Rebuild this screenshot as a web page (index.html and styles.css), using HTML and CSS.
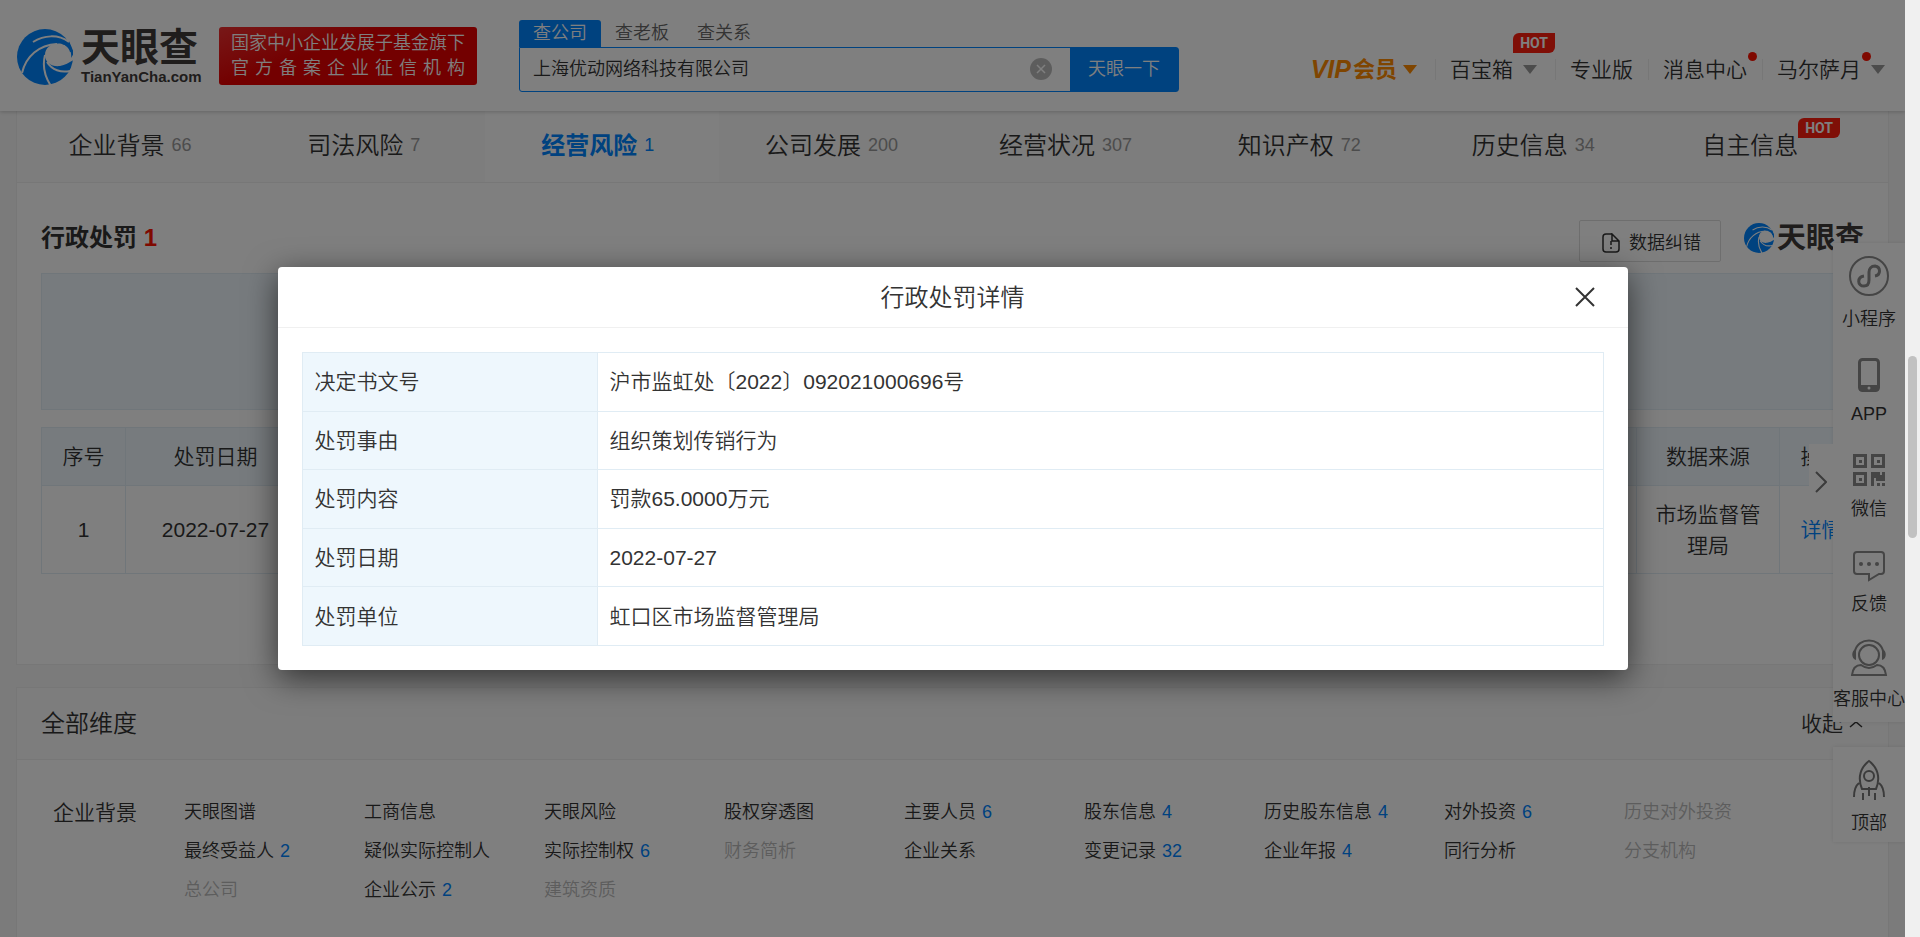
FILE: index.html
```html
<!DOCTYPE html>
<html lang="zh-CN">
<head>
    <meta charset="UTF-8">
    <meta name="viewport" content="width=device-width, initial-scale=1.0">
    <title>天眼查</title>
    <link rel="stylesheet" href="styles.css">
</head>
<body>
    <!-- shared icon shapes -->
    <svg class="defs" aria-hidden="true">
        <symbol id="swirl" viewBox="0 0 56 56">
            <circle cx="28" cy="28" r="28" fill="#0084ff"/>
            <path d="M45 15C36 13 28 18 28 26C28 34 35 38 43 37C49 36 53 33 58 30V22L53 23C52 19 49 16 45 15Z" fill="#fff"/>
            <path d="M45 15C52 17 55 22 54 29L57 24L52 12Z" fill="#0084ff"/>
            <path d="M16 13C27 6 41 5 52 13" fill="none" stroke="#fff" stroke-width="2"/>
            <path d="M40 15C22 16 9 27 5 44" fill="none" stroke="#fff" stroke-width="2"/>
            <path d="M28 26C25 38 28 48 34 57" fill="none" stroke="#fff" stroke-width="2"/>
            <path d="M30 33C35 41 44 44 53 42" fill="none" stroke="#fff" stroke-width="2"/>
        </symbol>
    </svg>

    <div class="page">
        <header class="header">
            <a class="logo" href="#">
                <svg class="logo-mark"><use href="#swirl"/></svg>
                <span class="logo-words">
                    <span class="logo-cn">天眼查</span>
                    <span class="logo-en">TianYanCha.com</span>
                </span>
            </a>
            <div class="slogan">
                <div>国家中小企业发展子基金旗下</div>
                <div>官 方 备 案 企 业 征 信 机 构</div>
            </div>
            <form class="search">
                <div class="search-tabs">
                    <a class="search-tab on" href="#">查公司</a>
                    <a class="search-tab" href="#">查老板</a>
                    <a class="search-tab" href="#">查关系</a>
                </div>
                <div class="search-row">
                    <input class="search-input" type="text" value="上海优动网络科技有限公司" aria-label="公司名称">
                    <button class="search-clear" type="button" aria-label="清除">
                        <svg width="22" height="22" viewBox="0 0 22 22"><circle cx="11" cy="11" r="11" fill="#bbb"/><path d="M7 7L15 15M15 7L7 15" stroke="#fff" stroke-width="1.5"/></svg>
                    </button>
                    <button class="search-btn" type="submit">天眼一下</button>
                </div>
            </form>
            <nav class="user-nav">
                <a class="vip" href="#"><i>VIP</i>会员<span class="caret"></span></a>
                <a class="box" href="#">百宝箱<span class="caret"></span><span class="hot hot-nav">HOT</span></a>
                <a href="#">专业版</a>
                <a class="dotted" href="#">消息中心</a>
                <a href="#"><span class="dotted">马尔萨月</span><span class="caret"></span></a>
            </nav>
        </header>

        <main class="main">
            <section class="card first">
                <nav class="tabs">
                    <a class="tab" href="#">企业背景<span class="num">66</span></a>
                    <a class="tab" href="#">司法风险<span class="num">7</span></a>
                    <a class="tab active" href="#">经营风险<span class="num">1</span></a>
                    <a class="tab" href="#">公司发展<span class="num">200</span></a>
                    <a class="tab" href="#">经营状况<span class="num">307</span></a>
                    <a class="tab" href="#">知识产权<span class="num">72</span></a>
                    <a class="tab" href="#">历史信息<span class="num">34</span></a>
                    <a class="tab tab-hot" href="#">自主信息<span class="hot">HOT</span></a>
                </nav>
                <div class="block">
                    <div class="block-head">
                        <h2>行政处罚 <span class="red">1</span></h2>
                        <button class="fix-btn" type="button">
                            <svg width="18" height="20" viewBox="0 0 18 20" fill="none" stroke="#333" stroke-width="1.5"><path d="M10 1H4Q1 1 1 4V16Q1 19 4 19H14Q17 19 17 16V8L10 1V8H17"/><path d="M9 8V12M9 14V16"/></svg>
                            数据纠错
                        </button>
                        <div class="watermark">
                            <svg class="watermark-mark"><use href="#swirl"/></svg>
                            <span>天眼查</span>
                        </div>
                    </div>
                    <div class="banner"></div>
                    <table class="list">
                        <colgroup>
                            <col class="c-no"><col class="c-date"><col><col class="c-src"><col class="c-op">
                        </colgroup>
                        <thead>
                            <tr><th>序号</th><th>处罚日期</th><th></th><th>数据来源</th><th>操作</th></tr>
                        </thead>
                        <tbody>
                            <tr><td>1</td><td>2022-07-27</td><td></td><td>市场监督管理局</td><td><a href="#">详情</a></td></tr>
                        </tbody>
                    </table>
                </div>
            </section>

            <section class="card">
                <div class="dim-head">
                    <h3>全部维度</h3>
                    <button class="fold" type="button">收起 <svg width="16" height="8" viewBox="0 0 16 8" fill="none" stroke="#333" stroke-width="1.5"><path d="M2 7L8 2L14 7"/></svg></button>
                </div>
                <div class="dim-body">
                    <h4>企业背景</h4>
                    <div class="dims">
                        <a href="#">天眼图谱</a>
                        <a href="#">工商信息</a>
                        <a href="#">天眼风险</a>
                        <a href="#">股权穿透图</a>
                        <a href="#">主要人员 <b>6</b></a>
                        <a href="#">股东信息 <b>4</b></a>
                        <a href="#">历史股东信息 <b>4</b></a>
                        <a href="#">对外投资 <b>6</b></a>
                        <a class="off" href="#">历史对外投资</a>
                        <a href="#">最终受益人 <b>2</b></a>
                        <a href="#">疑似实际控制人</a>
                        <a href="#">实际控制权 <b>6</b></a>
                        <a class="off" href="#">财务简析</a>
                        <a href="#">企业关系</a>
                        <a href="#">变更记录 <b>32</b></a>
                        <a href="#">企业年报 <b>4</b></a>
                        <a href="#">同行分析</a>
                        <a class="off" href="#">分支机构</a>
                        <a class="off" href="#">总公司</a>
                        <a href="#">企业公示 <b>2</b></a>
                        <a class="off" href="#">建筑资质</a>
                    </div>
                </div>
            </section>
        </main>

        <!-- floating tools on the right edge -->
        <aside class="side">
            <button class="side-toggle" type="button" aria-label="收起工具栏">
                <svg width="12" height="22" viewBox="0 0 12 22" fill="none" stroke="#777" stroke-width="2"><path d="M1 1L11 11L1 21"/></svg>
            </button>
            <div class="side-group">
                <a class="side-item" href="#">
                    <svg width="42" height="42" viewBox="0 0 42 42" fill="none" stroke="#8a8a8a" stroke-width="2"><circle cx="21" cy="21" r="19"/><path stroke-width="3" d="M16 21C9 22 9 31 16 31C20 31 21 28 21 25V17C21 14 23 11 27 11C33 12 33 20 27 21"/></svg>
                    小程序
                </a>
                <a class="side-item" href="#">
                    <svg width="22" height="34" viewBox="0 0 22 34"><rect x="1.500" y="1.500" width="19" height="31" rx="3" fill="none" stroke="#8a8a8a" stroke-width="3"/><path d="M1 27H21V31Q21 33 18 33H4Q1 33 1 31Z" fill="#8a8a8a"/><circle cx="11" cy="30" r="1.500" fill="#fff"/></svg>
                    APP
                </a>
                <a class="side-item" href="#">
                    <svg width="34" height="34" viewBox="0 0 34 34"><g fill="none" stroke="#8a8a8a" stroke-width="3"><rect x="2.500" y="2.500" width="11" height="11"/><rect x="20.500" y="2.500" width="11" height="11"/><rect x="2.500" y="20.500" width="11" height="11"/></g><path fill="#8a8a8a" d="M7 7h3v3h-3zM25 7h3v3h-3zM7 25h3v3h-3zM19 19h9v3h2v-3h3v9h-9v-3h-2v8h-3zM25 30h3v3h-3zM30 30h3v3h-3z"/></svg>
                    微信
                </a>
                <a class="side-item" href="#">
                    <svg width="34" height="32" viewBox="0 0 34 32"><path fill="none" stroke="#8a8a8a" stroke-width="2" d="M5 2H29Q32 2 32 5V21Q32 24 29 24H27L17 30V24H5Q2 24 2 21V5Q2 2 5 2Z"/><g fill="#8a8a8a"><circle cx="9" cy="14" r="2"/><circle cx="17" cy="14" r="2"/><circle cx="25" cy="14" r="2"/></g></svg>
                    反馈
                </a>
                <a class="side-item" href="#">
                    <svg width="38" height="38" viewBox="0 0 38 38"><g fill="none" stroke="#8a8a8a" stroke-width="2"><circle cx="19" cy="16" r="10"/><path d="M5 12C8 -2 30 -2 33 12M2 36C3 28 7 26 11 26Q19 32 27 26C31 26 35 28 36 36Z"/></g><path fill="#8a8a8a" d="M6 10V21C1 20 1 11 6 10ZM32 10V21C37 20 37 11 32 10Z"/></svg>
                    客服中心
                </a>
            </div>
            <div class="side-group">
                <a class="side-item" href="#">
                    <svg width="34" height="42" viewBox="0 0 34 42" fill="none" stroke="#777" stroke-width="2"><path d="M10 30C5 18 9 8 17 2C25 8 29 18 24 30ZM7 24Q2 28 2 38M27 24Q32 28 32 38M17 28V37M11 34V41M23 34V41"/><circle cx="17" cy="17" r="5"/></svg>
                    顶部
                </a>
            </div>
        </aside>

        <div class="mask">
            <div class="modal" role="dialog" aria-labelledby="modal-title">
                <div class="modal-head">
                    <h2 id="modal-title">行政处罚详情</h2>
                    <button class="modal-close" type="button" aria-label="关闭">
                        <svg width="20" height="20" viewBox="0 0 20 20" stroke="#333" stroke-width="2"><path d="M1 1L19 19M19 1L1 19"/></svg>
                    </button>
                </div>
                <div class="modal-body">
                    <table class="detail">
                        <tr><th>决定书文号</th><td>沪市监虹处〔2022〕092021000696号</td></tr>
                        <tr><th>处罚事由</th><td>组织策划传销行为</td></tr>
                        <tr><th>处罚内容</th><td>罚款65.0000万元</td></tr>
                        <tr><th>处罚日期</th><td>2022-07-27</td></tr>
                        <tr><th>处罚单位</th><td>虹口区市场监督管理局</td></tr>
                    </table>
                </div>
            </div>
        </div>
    </div>
    <div class="scrollbar"><div class="thumb"></div></div>
</body>
</html>
```
FILE: styles.css
```css
* {
    box-sizing: border-box;
}
body {
    display: flex;
    height: 100vh;
    margin: 0;
    overflow: hidden;
    background-color: #f7f7f7;
    color: #333;
    font-family: "Liberation Sans", "Noto Sans CJK SC", sans-serif;
    font-size: 21px;
    font-weight: 350;
    line-height: 31px;
}
h2, h3, h4 {
    margin: 0;
    font-weight: 350;
}
a {
    color: inherit;
    text-decoration: none;
}
button {
    padding: 0;
    border: 0;
    background: none;
    color: inherit;
    font: inherit;
    cursor: pointer;
}
svg {
    display: block;
}
.defs {
    position: absolute;
    width: 0;
    height: 0;
}
.page {
    position: relative;
    flex: 1;
    min-width: 0;
    overflow: hidden;
}

/* header */
.header {
    position: relative;
    display: flex;
    align-items: center;
    height: 111px;
    padding: 0 20px 0 17px;
    background-color: #fff;
    box-shadow: 0 1px 4px rgba(0, 0, 0, 0.2);
}
.logo {
    display: flex;
    align-items: center;
    gap: 8px;
    padding-top: 2px;
}
.logo-mark {
    width: 56px;
    height: 56px;
}
.logo-words {
    display: flex;
    flex-direction: column;
    width: 122px;
    color: #3e3a39;
    font-weight: bold;
}
.logo-cn {
    font-size: 39px;
    line-height: 40px;
    font-weight: 700;
}
.logo-en {
    font-size: 15px;
    line-height: 18px;
}
.slogan {
    width: 258px;
    margin-left: 16px;
    padding: 4px 12px;
    border-radius: 3px;
    background: linear-gradient(160deg, #f03030, #e60000 40%);
    color: #fff;
    font-size: 18px;
    line-height: 25px;
    text-align-last: justify;
    white-space: nowrap;
}
.search {
    width: 660px;
    margin-left: 42px;
    font-size: 18px;
}
.search-tabs {
    display: flex;
    line-height: 27px;
}
.search-tab {
    padding: 0 14px;
    color: #666;
}
.search-tab.on {
    border-radius: 3px 3px 0 0;
    background-color: #0084ff;
    color: #fff;
}
.search-row {
    display: flex;
    height: 45px;
    border: 1px solid #0084ff;
    border-radius: 0 3px 3px 3px;
}
.search-input {
    flex: 1;
    min-width: 0;
    padding: 0 13px;
    border: 0;
    background: none;
    color: #333;
    font: inherit;
}
.search-clear {
    margin-right: 18px;
}
.search-btn {
    padding: 0 18px;
    background-color: #0084ff;
    color: #fff;
}
.user-nav {
    display: flex;
    align-items: center;
    margin: 28px 0 0 auto;
}
.user-nav > a {
    position: relative;
    display: flex;
    align-items: center;
    padding: 0 15px 0 14px;
    line-height: 21px;
    white-space: nowrap;
}
.user-nav > a + a {
    border-left: 1px solid #eee;
}
.user-nav > .box {
    padding-right: 18px;
}
.user-nav > a:last-child {
    padding-right: 0;
}
.user-nav > .vip {
    gap: 2px;
    padding-right: 18px;
    color: #ff8a00;
    font-size: 22px;
    font-weight: 700;
}
.vip i {
    font-size: 25px;
}
.caret {
    margin-left: 10px;
    border: 7px solid transparent;
    border-top: 9px solid #999;
    border-bottom: 0;
}
.vip .caret {
    margin-left: 4px;
    border-top-color: #ff8a00;
}
.dotted {
    position: relative;
}
.dotted::after {
    content: "";
    position: absolute;
    top: -7px;
    right: -10px;
    width: 9px;
    height: 9px;
    border-radius: 50%;
    background-color: #ff1200;
}
.user-nav > .dotted::after {
    right: 5px;
}
.hot {
    padding: 0 7px;
    border-radius: 6px 0 6px 0;
    background-color: #ff1e0f;
    color: #fff;
    font-family: Roboto, sans-serif;
    font-size: 14px;
    font-weight: bold;
    line-height: 20px;
}
.hot-nav {
    position: absolute;
    top: -26px;
    right: 0;
}

/* cards */
.main {
    display: flex;
    flex-direction: column;
    gap: 22px;
    padding: 0 16px;
}
.card {
    border: 1px solid #eee;
    background-color: #fff;
}
.first {
    border-top: 0;
}
.tabs {
    display: grid;
    grid-template-columns: repeat(8, 1fr);
    height: 72px;
    border-bottom: 1px solid #eee;
    background-color: #fafafa;
    font-size: 24px;
}
.tab {
    display: flex;
    align-items: center;
    justify-content: center;
    padding: 0 8px 2px 0;
    white-space: nowrap;
}
.tab .num {
    margin-left: 7px;
    color: #999;
    font-size: 18px;
}
.tab.active {
    background-color: #fff;
    color: #0084ff;
    font-weight: 700;
}
.tab.active .num {
    color: #0084ff;
    font-weight: 400;
}
.tab-hot {
    padding-right: 0;
}
.tab .hot {
    align-self: flex-start;
    margin-top: 7px;
}
.block {
    padding: 37px 24px 90px;
}
.block-head {
    display: flex;
    align-items: flex-start;
    margin-bottom: 11px;
    line-height: 36px;
}
.block-head h2 {
    margin-right: auto;
    font-size: 24px;
    font-weight: 700;
}
.red {
    color: #ff1200;
}
.fix-btn {
    display: flex;
    align-items: center;
    gap: 9px;
    height: 42px;
    padding: 4px 19px 0 22px;
    border: 1px solid #ddd;
    border-radius: 2px;
    font-size: 18px;
}
.watermark {
    display: flex;
    align-items: center;
    gap: 3px;
    margin-left: 23px;
    color: #3e3a39;
    font-size: 29px;
    font-weight: 700;
}
.watermark-mark {
    width: 30px;
    height: 30px;
}
.banner {
    height: 137px;
    margin-bottom: 17px;
    border: 1px solid #e0ecf4;
    background-color: #eef7fd;
}
table {
    width: 100%;
    border-collapse: collapse;
}
th {
    font-weight: 350;
}
.list {
    table-layout: fixed;
    text-align: center;
}
.list th,
.list td {
    padding: 13px 18px;
    border: 1px solid #e0ecf4;
}
.list td {
    padding: 12px 18px;
    height: 88px;
}
.list th {
    background-color: #eef7fd;
}
.list a {
    color: #0084ff;
}
.c-no { width: 84px; }
.c-date { width: 180px; }
.c-src { width: 143px; }
.c-op { width: 84px; }

.dim-head {
    display: flex;
    align-items: center;
    justify-content: space-between;
    height: 72px;
    padding: 0 24px;
    border-bottom: 1px solid #eee;
    background-color: #fafafa;
}
.dim-head h3 {
    font-size: 24px;
}
.fold {
    display: flex;
    align-items: center;
    gap: 5px;
}
.dim-body {
    display: flex;
    padding: 33px 24px 48px 36px;
}
.dim-body h4 {
    width: 131px;
    font-size: 21px;
    line-height: 39px;
}
.dims {
    display: grid;
    flex: 1;
    grid-template-columns: repeat(9, 180px);
    font-size: 18px;
    line-height: 39px;
    white-space: nowrap;
}
.dims b {
    margin-left: 1px;
    color: #0084ff;
    font-weight: 400;
}
.dims .off {
    color: #bbb;
}

/* right tools, over the page */
.side {
    position: absolute;
    top: 243px;
    right: 0;
    display: flex;
    flex-direction: column;
    gap: 25px;
    width: 72px;
    font-size: 18px;
    line-height: 26px;
    white-space: nowrap;
}
.side-group {
    background-color: #fff;
    box-shadow: 0 0 4px rgba(0, 0, 0, 0.1);
}
.side-group:first-of-type {
    padding-bottom: 4px;
}
.side-item {
    display: flex;
    flex-direction: column;
    align-items: center;
    justify-content: flex-end;
    gap: 9px;
    height: 95px;
    padding-bottom: 6px;
}
.side-toggle {
    position: absolute;
    top: 201px;
    right: 72px;
    width: 24px;
    height: 76px;
    padding-left: 6px;
    background-color: #fff;
}

/* dialog */
.mask {
    position: absolute;
    inset: 0;
    display: flex;
    align-items: center;
    justify-content: center;
    background-color: rgba(0, 0, 0, 0.5);
}
.modal {
    width: 1350px;
    max-width: 100%;
    border-radius: 4px;
    background-color: #fff;
    box-shadow: 0 8px 32px rgba(0, 0, 0, 0.6);
}
.modal-head {
    display: flex;
    align-items: center;
    height: 61px;
    padding: 0 33px;
    border-bottom: 1px solid #f0f0f0;
}
.modal-head h2 {
    flex: 1;
    padding-left: 20px;
    font-size: 24px;
    text-align: center;
}
.modal-body {
    padding: 24px;
}
.detail {
    height: 294px;
    text-align: left;
}
.detail th,
.detail td {
    padding: 0 12px;
    border: 1px solid #e0ecf4;
}
.detail th {
    width: 295px;
    background-color: #eef7fd;
}

/* window scrollbar */
.scrollbar {
    width: 15px;
    padding: 356px 3px 0;
    background-color: #f0f0f0;
}
.thumb {
    height: 182px;
    border-radius: 5px;
    background-color: #c1c1c1;
}
```
